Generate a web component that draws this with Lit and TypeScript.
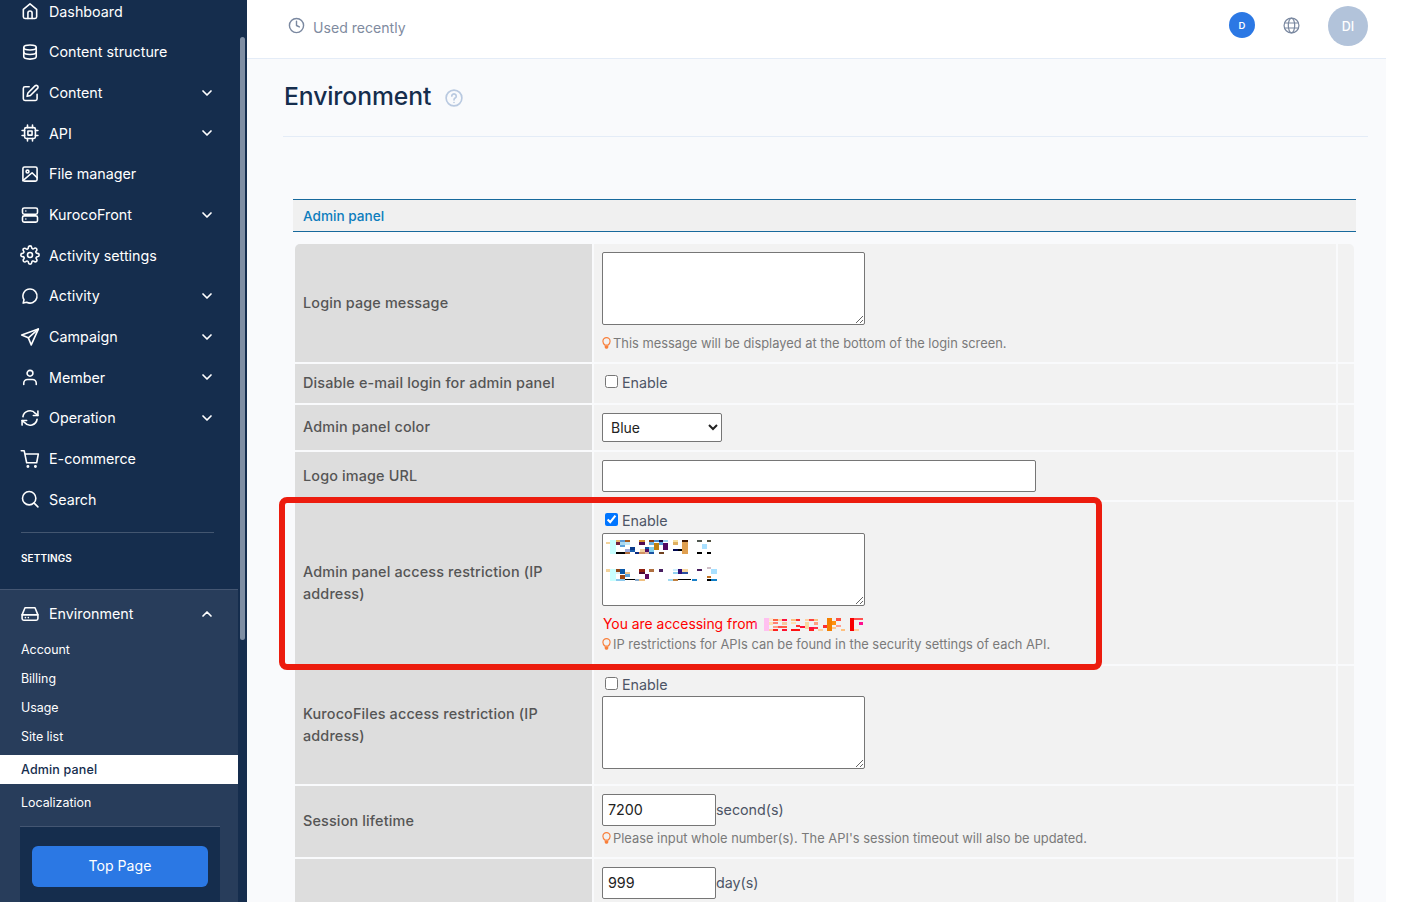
import { LitElement, html, css, svg } from "lit";
import { customElement } from "lit/decorators.js";

const ICONS: Record<string, any> = {
  home: svg`<path d="M4 10l8-6.5L20 10v9a2 2 0 0 1-2 2H6a2 2 0 0 1-2-2z"/><path d="M9.5 21v-6.5a2.5 2.5 0 0 1 5 0V21"/>`,
  db: svg`<path d="M4.5 6.5C4.5 4.5 8 3.5 12 3.5s7.5 1 7.5 3v11c0 2-3.500 3-7.500 3s-7.500-1-7.500-3z"/><path d="M4.500 6.500c0 2 3.500 3 7.500 3s7.500-1 7.500-3M4.500 12c0 2 3.500 3 7.500 3s7.500-1 7.500-3"/>`,
  edit: svg`<path d="M11 4.500H6a2 2 0 0 0-2 2V19a2 2 0 0 0 2 2h12.500a2 2 0 0 0 2-2v-5.500"/><path d="M18 3.500a2.100 2.100 0 0 1 3 3l-8.500 8.500-4 1 1-4z"/>`,
  cpu: svg`<rect x="5.500" y="5.500" width="13" height="13" rx="2"/><rect x="9.500" y="9.500" width="5" height="5"/><path d="M9 2.500v3M15 2.500v3M9 18.500v3M15 18.500v3M2.500 9h3M2.500 15h3M18.500 9h3M18.500 15h3"/>`,
  image: svg`<rect x="3.500" y="3.500" width="17" height="17" rx="2"/><circle cx="9" cy="9" r="1.700"/><path d="M3.500 20l11-9.500 6 6"/>`,
  server: svg`<rect x="3" y="3.500" width="18" height="7.500" rx="2"/><rect x="3" y="13" width="18" height="7.500" rx="2"/><path d="M7 7.200h.01M7 16.800h.01"/>`,
  gear: svg`<circle cx="12" cy="12" r="3"/><path d="M19.400 15a1.650 1.650 0 0 0 .33 1.820l.06.06a2 2 0 1 1-2.830 2.830l-.06-.06a1.650 1.650 0 0 0-2.800 1.170V21a2 2 0 0 1-4 0v-.09A1.650 1.650 0 0 0 7.280 19.700l-.06.06a2 2 0 1 1-2.830-2.830l.06-.06A1.650 1.650 0 0 0 3.090 14H3a2 2 0 0 1 0-4h.09A1.650 1.650 0 0 0 4.300 7.280l-.06-.06a2 2 0 1 1 2.830-2.830l.06.06A1.650 1.650 0 0 0 10 3.090V3a2 2 0 0 1 4 0v.09a1.650 1.650 0 0 0 2.800 1.170l.06-.06a2 2 0 1 1 2.830 2.830l-.06.06A1.650 1.650 0 0 0 20.910 10H21a2 2 0 0 1 0 4h-.09a1.650 1.650 0 0 0-1.510 1z"/>`,
  chat: svg`<path d="M12 3.500a8.500 8.500 0 1 1-4 16L3.800 20.500l1-4A8.500 8.500 0 0 1 12 3.500z"/>`,
  send: svg`<path d="M22 2.500L2 9.500l8 3.500 3.500 8.500z"/><path d="M22 2.500L10 13"/>`,
  user: svg`<circle cx="12" cy="7.500" r="3.500"/><path d="M4.500 21v-1.500A4.500 4.500 0 0 1 9 15h6a4.500 4.500 0 0 1 4.500 4.500V21"/>`,
  sync: svg`<path d="M3.500 10.500A8.500 8.500 0 0 1 18.500 6.500l3 2.500"/><path d="M21.500 3.500V9h-5.500"/><path d="M20.500 13.500A8.500 8.500 0 0 1 5.500 17.500L2.500 15"/><path d="M2.500 20.500V15H8"/>`,
  cart: svg`<circle cx="9.500" cy="21" r=".8"/><circle cx="18.500" cy="21" r=".8"/><path d="M1.500 2h3.500l3 14.500h12l2-10.500H6"/>`,
  search: svg`<circle cx="11" cy="11" r="8"/><path d="M21.500 21.500L17 17"/>`,
  hdd: svg`<path d="M2.500 13l3.500-8.500h12l3.500 8.500v4.500a2 2 0 0 1-2 2h-15a2 2 0 0 1-2-2z"/><path d="M2.500 13h19M6.500 16.300h.01M10 16.300h.01"/>`,
};

const NAV: [string, string, boolean][] = [
  ["home", "Dashboard", false],
  ["db", "Content structure", false],
  ["edit", "Content", true],
  ["cpu", "API", true],
  ["image", "File manager", false],
  ["server", "KurocoFront", true],
  ["gear", "Activity settings", false],
  ["chat", "Activity", true],
  ["send", "Campaign", true],
  ["user", "Member", true],
  ["sync", "Operation", true],
  ["cart", "E-commerce", false],
  ["search", "Search", false],
];

type R = [number, number, number, number, string];
const MOSAIC_A: R[] = [
  [18,24,12,6,"#f3d39b"],[30,17,18,43,"#c8ffff"],[48,17,12,8,"#e8b46a"],[60,17,15,8,"#5b9bd5"],[75,17,15,8,"#a5591c"],
  [48,25,12,8,"#70203f"],[60,25,15,8,"#a8d8f0"],[75,25,15,8,"#bfe6f7"],[60,33,15,6,"#5ba3dc"],[48,54,27,6,"#000"],
  [75,54,15,6,"#b07040"],[75,46,15,8,"#99aadd"],[90,40,15,8,"#0a3a8a"],[90,48,15,6,"#1a60b0"],[105,54,12,6,"#0a2a80"],
  [117,17,18,7,"#d09030"],[117,25,18,7,"#500a50"],[120,46,15,8,"#f0d0a0"],[135,40,15,8,"#1050a0"],[135,46,12,8,"#500a60"],
  [117,54,18,6,"#d09060"],[135,54,12,6,"#e0b0a0"],[147,17,15,8,"#8a3a10"],[147,25,15,8,"#6ab0e0"],[162,17,15,8,"#4a90d0"],
  [177,17,12,8,"#200a40"],[189,17,15,8,"#a0d8f0"],[162,28,15,20,"#c08010"],[147,40,15,14,"#80d0f0"],[147,54,15,6,"#1a50a0"],
  [177,54,15,6,"#704020"],[189,28,15,20,"#500a60"],[177,25,12,8,"#5aa0d8"],[219,17,15,8,"#f8e0a0"],[219,25,15,8,"#e0b060"],
  [219,45,15,6,"#000a50"],[234,45,12,6,"#000"],[246,17,18,7,"#401800"],[246,24,18,36,"#e0a050"],[291,17,15,7,"#505850"],
  [321,17,12,7,"#505040"],[306,30,15,15,"#a8e0ff"],[291,54,15,6,"#000"],[321,54,12,6,"#000"],
  [18,105,12,8,"#f3d39b"],[30,105,18,36,"#c8ffff"],[48,105,12,8,"#904818"],[60,105,15,15,"#0a58a8"],[48,113,12,7,"#d8f0f8"],
  [75,113,15,8,"#f0c890"],[60,124,15,10,"#a04810"],[75,121,15,7,"#5ba0d8"],[48,134,27,7,"#8bc8ec"],[75,134,30,3,"#000"],
  [105,134,12,6,"#88aacc"],[117,105,18,8,"#902010"],[117,113,18,8,"#500a30"],[135,120,12,14,"#600a60"],[117,134,18,7,"#f0c080"],
  [147,105,15,8,"#b07040"],[177,105,12,8,"#4a2060"],[219,105,15,6,"#d0f0ff"],[234,105,12,15,"#30107a"],[246,105,18,8,"#f8d8a0"],
  [219,113,15,8,"#90d0f0"],[246,113,18,7,"#2a50a0"],[219,134,15,7,"#c08040"],[234,134,12,3,"#000"],[246,134,27,3,"#000"],
  [204,134,15,7,"#a0d8f0"],[276,134,15,7,"#1a80c8"],[291,105,15,6,"#4a2060"],[321,99,12,6,"#d0c0c8"],[333,105,18,15,"#a8e0ff"],
  [321,125,12,8,"#c07020"],[321,134,12,7,"#000"],[333,134,18,7,"#1080c8"],
];
const MOSAIC_B: R[] = [
  [0,30,3,20,"#ff5aa0"],[27,18,15,40,"#ffc0f0"],[42,18,12,8,"#fde8d0"],[54,20,15,6,"#ff6040"],[69,20,12,6,"#fcd8a0"],[81,20,15,6,"#ff1040"],
  [42,30,12,8,"#ffe0b0"],[54,30,15,6,"#ff8070"],[81,30,15,8,"#f8c8a0"],[54,42,15,6,"#ffa080"],[69,42,12,6,"#ff5050"],[81,42,15,6,"#ff6040"],
  [42,52,12,6,"#ffd0a0"],[54,52,15,6,"#ff2020"],[81,52,15,6,"#ff1030"],[108,20,15,8,"#fcc080"],[123,20,12,8,"#ff3030"],[108,30,15,6,"#ffe0b0"],
  [123,38,12,6,"#ff3030"],[108,52,27,6,"#ff1010"],[135,42,15,6,"#ff1030"],[150,20,12,8,"#ffd0a0"],[162,20,15,8,"#ff4040"],[177,20,12,6,"#fcc080"],
  [150,30,12,22,"#f8d8a0"],[162,44,15,8,"#ff1040"],[177,30,12,8,"#ffa080"],[162,52,15,6,"#ff2020"],[177,44,12,8,"#ff3040"],[189,52,15,6,"#fcd0a0"],
  [216,18,15,40,"#f48000"],[204,40,12,8,"#ff3030"],[231,28,12,12,"#ff9010"],[243,18,15,8,"#ff5040"],[243,38,15,6,"#ffa090"],[231,44,12,8,"#ffc890"],
  [258,52,12,6,"#ffc080"],[285,18,12,40,"#f80000"],[297,18,27,7,"#ff5050"],[312,30,12,8,"#ff1090"],[297,52,15,6,"#ffd0a0"],
];

const mosaic = (rects: R[], w: number, h: number, cls: string) => html`<svg class=${cls} viewBox="0 0 ${w} ${h}" width=${w / 3} height=${h / 3} shape-rendering="crispEdges">
  ${rects.map((r) => svg`<rect x=${r[0]} y=${r[1]} width=${r[2]} height=${r[3]} fill=${r[4]}/>`)}
</svg>`;

const icon = (name: string) => html`<svg class="ic" viewBox="0 0 24 24">${ICONS[name]}</svg>`;
const chev = (up = false) => html`<svg class="chev" viewBox="0 0 12 12"><path d=${up ? "M2 8l4-4 4 4" : "M2 4l4 4 4-4"}/></svg>`;
const bulb = html`<svg class="bulb" viewBox="0 0 10 15"><path d="M3.200 9.800C2 8.800 1 7.600 1 5.500a4 4 0 0 1 8 0c0 2.100-1 3.300-2.200 4.300z"/><path class="fill" d="M3 10.500h4v1.800a1.500 1.500 0 0 1-1.500 1.500h-1A1.500 1.500 0 0 1 3 12.300z"/></svg>`;

@customElement("app-root")
export class AppRoot extends LitElement {
  static styles = css`
    :host { display: block; width: 1401px; height: 902px; overflow: hidden; background: #fff; font-family: Inter, "Noto Sans", sans-serif; position: relative; }
    .page { display: grid; grid-template-columns: 247px 1139px; height: 902px; }
    .side { background: #152d4d; display: grid; grid-template-columns: 238px 9px; height: 902px; overflow: hidden; color: #fff; }
    .side-in { display: flex; flex-direction: column; height: 902px; }
    .thumb { width: 5px; height: 603px; margin: 37px 0 0 2px; background: #7f8ea3; border-radius: 3px; }
    .nav { margin-top: -9px; }
    .item { display: flex; align-items: center; height: 40.67px; padding-left: 20px; font-size: 14.300px; }
    .item span { flex: 1; margin-left: 9px; }
    .ic { width: 20px; height: 20px; fill: none; stroke: #fff; stroke-width: 1.900; stroke-linecap: round; stroke-linejoin: round; flex: none; }
    .chev { width: 12px; height: 12px; fill: none; stroke: #fff; stroke-width: 1.700; stroke-linecap: round; stroke-linejoin: round; margin-right: 25px; flex: none; }
    .divider { height: 1px; margin: 12.300px 24px 0 21px; background: #435670; }
    .settings { height: 56px; box-sizing: border-box; padding: 0 0 6px 21px; display: flex; align-items: center; font-size: 10px; font-weight: 600; letter-spacing: .1px; }
    .env { flex: 1; background: #283d5b; border-top: 1px solid #445672; display: flex; flex-direction: column; }
    .env .item { height: 45px; padding-top: 3px; box-sizing: border-box; }
    .sub { display: flex; align-items: center; height: 29px; padding-left: 21px; font-size: 12.400px; }
    .sub.active { background: #fff; color: #152d4d; margin: 4px 0; font-weight: 500; letter-spacing: .15px; font-size: 12.500px; }
    .panel { flex: 1; margin: 9px 18px 0 20px; background: #152d4d; border-top: 1px solid #445672; padding: 19px 12px 0; }
    .btn { height: 41px; box-sizing: border-box; padding-bottom: 2px; background: #2b78e4; border-radius: 6px; display: flex; align-items: center; justify-content: center; font-size: 14.100px; color: #fff; }

    .main { background: #f9fafc; height: 902px; overflow: hidden; position: relative; }
    .top { height: 58px; box-sizing: border-box; background: #fff; display: flex; align-items: center; padding: 0 18px 0 41px; }
    .rule { height: 1px; background: #e4ecf7; }
    .clock { width: 17px; height: 17px; fill: none; stroke: #7a88a0; stroke-width: 2; stroke-linecap: round; stroke-linejoin: round; margin: -8px 8px 0 0; }
    .recent { flex: 1; font-size: 14.100px; color: #7f8ba0; margin-top: -3px; }
    .d { width: 26px; height: 26px; border-radius: 50%; background: #2b78e4; color: #fff; font-size: 9.500px; font-weight: 600; display: flex; align-items: center; justify-content: center; margin: -8px 28px 0 0; }
    .globe { width: 17px; height: 17px; fill: none; stroke: #7a88a0; stroke-width: 1.700; margin: -8px 28px 0 0; }
    .di { width: 40px; height: 40px; border-radius: 50%; background: #b2c3da; color: #fff; font-size: 12.500px; font-weight: 500; display: flex; align-items: center; justify-content: center; margin-top: -6px; }
    .body { margin: 0 18px 0 36px; }
    .title { height: 78px; display: flex; align-items: center; padding: 0 0 3px 1px; box-sizing: border-box; border-bottom: 1px solid #e4ecf7; }
    h1 { margin: 0; font-size: 24.700px; font-weight: 500; color: #152d4d; letter-spacing: -.1px; }
    .q { width: 18px; height: 18px; margin: 3px 0 0 14px; fill: none; stroke: #b9c9e0; stroke-width: 2.200; stroke-linecap: round; }
    .sect { margin: 62px 12px 12px 10px; height: 33px; box-sizing: border-box; background: #f0f0f0; border-top: 1px solid #17699c; border-bottom: 1px solid #17699c; display: flex; align-items: center; padding-left: 10px; font-size: 13.600px; font-weight: 500; color: #0d7dbd; }
    .tbl { margin: 0 14px 0 12px; display: grid; grid-template-columns: 297px 742px 16px; grid-template-rows: 118px 39px 45px 48px 162px 118px 71px 60px; gap: 2px; }
    .lab { background: #ddd; display: flex; align-items: center; padding: 0 8px; color: #555; font-size: 14.400px; font-weight: 500; letter-spacing: .15px; line-height: 22.500px; }
    .lab.first { border-top-left-radius: 5px; }
    .val { background: #f2f2f2; padding: 8px; display: flex; flex-direction: column; align-items: flex-start; color: #4d5566; font-size: 14.300px; box-sizing: border-box; position: relative; }
    .val.check { padding-top: 8px; }
    .val.mid { justify-content: center; padding: 0 8px 2px; }
    .pad { background: #f2f2f2; }
    .pad.first { border-top-right-radius: 5px; }
    textarea { box-sizing: border-box; width: 263px; height: 73px; margin: 0; display: block; background: #fff; border: 1px solid #767676; border-radius: 2px; }
    .ck { display: flex; align-items: center; height: 20px; }
    .ck input { margin: 0 4px 2px 3px; width: 13px; height: 13px; }
    select { width: 120px; height: 29px; font-family: inherit; font-size: 14px; padding-left: 4px; background: #fff; color: #222; border: 1px solid #767676; border-radius: 2px; margin: 0; }
    .text { box-sizing: border-box; height: 32px; background: #fff; border: 1px solid #767676; border-radius: 2px; padding: 0 5px 2px; margin: 0; font-family: inherit; font-size: 14.300px; color: #222; }
    .long { width: 434px; }
    .num { width: 114px; }
    .inl { display: flex; align-items: center; font-size: 14.300px; }
    .unit { margin-bottom: 2px; }
    .help { display: flex; align-items: center; height: 20px; font-size: 12.870px; color: #7a7a7a; }
    .bulb { width: 9px; height: 14px; margin-right: 2px; fill: none; stroke: #f97f3a; stroke-width: 1.300; flex: none; }
    .bulb .fill { fill: #f97f3a; stroke: none; }
    .m8 { margin-top: 8px; }
    .m3 { margin-top: 3px; }
    .m2 { margin-top: 2px; }
    .red { display: flex; align-items: center; height: 20px; color: #ff0000; font-size: 13.900px; margin: 8px 0 0 1px; position: relative; width: 100%; }
    .ta-wrap { position: relative; }
    .ma { position: absolute; left: -2px; top: 1px; }
    .mb { margin-left: -3px; }
    .box { position: absolute; left: 32px; top: 497px; width: 823px; height: 173px; box-sizing: border-box; border: 6px solid #ec1c0e; border-radius: 8px; pointer-events: none; }
  `;

  render() {
    return html`<div class="page">
      <aside class="side">
        <div class="side-in">
          <div class="nav">
            ${NAV.map(([i, t, c]) => html`<div class="item">${icon(i)}<span>${t}</span>${c ? chev() : ""}</div>`)}
          </div>
          <div class="divider"></div>
          <div class="settings">SETTINGS</div>
          <div class="env">
            <div class="item">${icon("hdd")}<span>Environment</span>${chev(true)}</div>
            <div class="sub">Account</div>
            <div class="sub">Billing</div>
            <div class="sub">Usage</div>
            <div class="sub">Site list</div>
            <div class="sub active">Admin panel</div>
            <div class="sub">Localization</div>
            <div class="panel"><div class="btn">Top Page</div></div>
          </div>
        </div>
        <div class="thumb"></div>
      </aside>
      <main class="main">
        <div class="top">
          <svg class="clock" viewBox="0 0 24 24"><circle cx="12" cy="12" r="10"/><path d="M12 6v6l4 2"/></svg>
          <div class="recent">Used recently</div>
          <div class="d">D</div>
          <svg class="globe" viewBox="0 0 24 24"><circle cx="12" cy="12" r="10.500"/><ellipse cx="12" cy="12" rx="4.500" ry="10.500"/><path d="M2 8.500h20M2 15.500h20"/></svg>
          <div class="di">DI</div>
        </div>
        <div class="rule"></div>
        <div class="body">
          <div class="title">
            <h1>Environment</h1>
            <svg class="q" viewBox="0 0 24 24"><circle cx="12" cy="12" r="10.500"/><path d="M9 9.500a3 3 0 1 1 4.500 2.600c-1 .6-1.500 1.200-1.500 2.400M12 18h.01"/></svg>
          </div>
          <div class="sect">Admin panel</div>
          <div class="tbl">
            <div class="lab first">Login page message</div>
            <div class="val"><textarea></textarea><div class="help m8">${bulb}This message will be displayed at the bottom of the login screen.</div></div>
            <div class="pad first"></div>

            <div class="lab">Disable e-mail login for admin panel</div>
            <div class="val mid"><label class="ck"><input type="checkbox" />Enable</label></div>
            <div class="pad"></div>

            <div class="lab">Admin panel color</div>
            <div class="val"><select><option>Blue</option></select></div>
            <div class="pad"></div>

            <div class="lab">Logo image URL</div>
            <div class="val"><input class="text long" /></div>
            <div class="pad"></div>

            <div class="lab">Admin panel access restriction (IP address)</div>
            <div class="val check">
              <label class="ck"><input type="checkbox" checked />Enable</label>
              <div class="ta-wrap m3"><textarea></textarea>${mosaic(MOSAIC_A, 390, 156, "ma")}</div>
              <div class="red">You are accessing from${mosaic(MOSAIC_B, 360, 72, "mb")}</div>
              <div class="help">${bulb}IP restrictions for APIs can be found in the security settings of each API.</div>
            </div>
            <div class="pad"></div>

            <div class="lab">KurocoFiles access restriction (IP address)</div>
            <div class="val check">
              <label class="ck"><input type="checkbox" />Enable</label>
              <textarea class="m2"></textarea>
            </div>
            <div class="pad"></div>

            <div class="lab">Session lifetime</div>
            <div class="val">
              <div class="inl"><input class="text num" value="7200" /><span class="unit">second(s)</span></div>
              <div class="help m2">${bulb}Please input whole number(s). The API's session timeout will also be updated.</div>
            </div>
            <div class="pad"></div>

            <div class="lab"></div>
            <div class="val"><div class="inl"><input class="text num" value="999" /><span class="unit">day(s)</span></div></div>
            <div class="pad"></div>
          </div>
        </div>
        <div class="box"></div>
      </main>
    </div>`;
  }
}
